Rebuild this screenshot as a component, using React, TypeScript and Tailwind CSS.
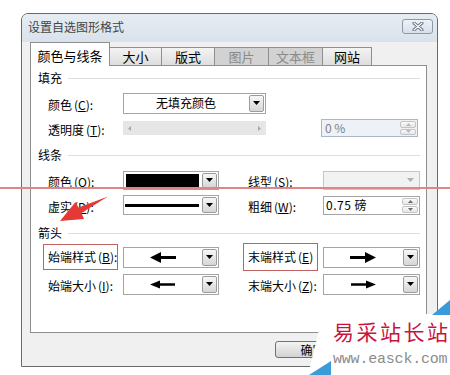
import React from "react";

function Tri({ c = "#000" }: { c?: string }) {
  return (
    <svg width="7" height="4" viewBox="0 0 7 4">
      <polygon points="0,0 7,0 3.5,4" fill={c} />
    </svg>
  );
}

function DropBtn({ disabled }: { disabled?: boolean }) {
  return disabled ? (
    <div className="w-[15px] self-stretch m-[1px] flex items-center justify-center">
      <Tri c="#b0b0b0" />
    </div>
  ) : (
    <div className="w-[15px] self-stretch m-[1px] border border-[#9c9c9c] rounded-[2px] bg-linear-to-b from-[#f7f7f7] to-[#d6d6d6] flex items-center justify-center">
      <Tri />
    </div>
  );
}

function Spin({ dim }: { dim?: boolean }) {
  const c = dim ? "#b8b8b8" : "#6a6a6a";
  return (
    <div className="w-[16px] self-stretch m-[1px] flex flex-col gap-[1px]">
      <div className="flex-1 border border-[#c4c4c4] rounded-[2px] bg-linear-to-b from-[#fafafa] to-[#e6e6e6] flex items-center justify-center">
        <svg width="5" height="3" viewBox="0 0 5 3">
          <polygon points="0,3 5,3 2.5,0" fill={c} />
        </svg>
      </div>
      <div className="flex-1 border border-[#c4c4c4] rounded-[2px] bg-linear-to-b from-[#fafafa] to-[#e6e6e6] flex items-center justify-center">
        <svg width="5" height="3" viewBox="0 0 5 3">
          <polygon points="0,0 5,0 2.5,3" fill={c} />
        </svg>
      </div>
    </div>
  );
}

function Section({ t }: { t: string }) {
  return (
    <div className="flex items-center pl-[7px] pr-[6px] h-[14px]">
      <span className="text-[12px]">{t}</span>
      <div className="flex-1 h-px bg-[#dedede] ml-[6px]" />
    </div>
  );
}

function Lbl({ a, k, colon = true }: { a: string; k: string; colon?: boolean }) {
  return (
    <span className="text-[12px] whitespace-nowrap">
      {a}
      <span className="ml-[2px]">(</span>
      <span className="underline">{k}</span>){colon ? ":" : ""}
    </span>
  );
}

function LeftArrow({ big }: { big?: boolean }) {
  return big ? (
    <svg width="26" height="11" viewBox="0 0 26 11">
      <polygon points="0,5.5 11,0 11,4 26,4 26,7 11,7 11,11" fill="#000" />
    </svg>
  ) : (
    <svg width="25" height="9" viewBox="0 0 25 9">
      <polygon points="0,4.5 10,0.5 10,3.2 25,3.2 25,5.8 10,5.8 10,8.5" fill="#000" />
    </svg>
  );
}

function RightArrow({ big }: { big?: boolean }) {
  return big ? (
    <svg width="26" height="11" viewBox="0 0 26 11">
      <polygon points="26,5.5 15,0 15,4 0,4 0,7 15,7 15,11" fill="#000" />
    </svg>
  ) : (
    <svg width="25" height="9" viewBox="0 0 25 9">
      <polygon points="25,4.5 15,0.5 15,3.2 0,3.2 0,5.8 15,5.8 15,8.5" fill="#000" />
    </svg>
  );
}

export default function App() {
  return (
    <div className="relative w-[450px] h-[375px] overflow-hidden bg-white text-black leading-none font-['Noto_Sans_CJK_SC','Noto_Sans',sans-serif]">
      <div className="ml-[21px] mt-[13px] w-[417px] h-[354px] border border-[#6a6a6a] rounded-t-[7px] bg-[#f0f0f0] flex flex-col">
        {/* Title bar */}
        <div className="h-[28px] shrink-0 rounded-t-[6px] bg-linear-to-b from-[#e6ecf2] to-[#d9e2eb] flex items-start justify-between pl-[6px] pr-[4px]">
          <span className="mt-[7px] text-[12px] text-[#444]">设置自选图形格式</span>
          <div className="mt-[5px] w-[31px] h-[15px] border border-[#8b9aab] rounded-[3px] bg-linear-to-b from-[#eef2f6] to-[#d8e0e8] flex items-center justify-center">
            <svg width="12" height="9" viewBox="0 0 12 9">
              <path d="M2 1 L10 8 M10 1 L2 8" stroke="#5c6a7a" strokeWidth="3" strokeLinecap="round" />
              <path d="M2 1 L10 8 M10 1 L2 8" stroke="#ffffff" strokeWidth="1.2" strokeLinecap="round" />
            </svg>
          </div>
        </div>

        {/* Tabs */}
        <div className="ml-[8px] h-[23px] shrink-0 flex items-end relative z-10 text-[13px]">
          <div className="w-[80px] h-[24px] mb-[-1px] border border-b-0 border-[#8e8f8f] bg-white flex items-center justify-center pt-[1px]">
            颜色与线条
          </div>
          <div className="w-[52px] h-[18px] border border-l-0 border-b-0 border-[#8e8f8f] bg-linear-to-b from-[#f3f3f3] to-[#dedede] flex items-center justify-center">
            大小
          </div>
          <div className="w-[53px] h-[18px] border border-l-0 border-b-0 border-[#8e8f8f] bg-linear-to-b from-[#f3f3f3] to-[#dedede] flex items-center justify-center">
            版式
          </div>
          <div className="w-[54px] h-[18px] border border-l-0 border-b-0 border-[#8e8f8f] bg-[#d2d2d2] text-[#8a8a8a] flex items-center justify-center">
            图片
          </div>
          <div className="w-[54px] h-[18px] border border-l-0 border-b-0 border-[#8e8f8f] bg-[#d2d2d2] text-[#8a8a8a] flex items-center justify-center">
            文本框
          </div>
          <div className="w-[49px] h-[18px] border border-l-0 border-b-0 border-[#8e8f8f] bg-linear-to-b from-[#f3f3f3] to-[#dedede] flex items-center justify-center">
            网站
          </div>
        </div>

        {/* Panel */}
        <div className="ml-[8px] w-[397px] h-[268px] shrink-0 border border-[#8e8f8f] bg-white flex flex-col">
          <div className="mt-[5px]">
            <Section t="填充" />
          </div>

          <div className="mt-[7px] h-[22px] flex items-center pl-[12px]">
            <div className="w-[80px] pl-[5px]">
              <Lbl a="颜色" k="C" />
            </div>
            <div className="w-[143px] h-[21px] border border-[#a5a5a5] bg-white flex">
              <div className="flex-1 flex items-center justify-center text-[12px]">无填充颜色</div>
              <DropBtn />
            </div>
          </div>

          <div className="mt-[3px] h-[22px] flex items-center pl-[12px]">
            <div className="w-[80px] pl-[5px]">
              <Lbl a="透明度" k="T" />
            </div>
            <div className="w-[143px] h-[14px] bg-[#e6e6e6] flex items-center justify-between px-[5px]">
              <svg width="3" height="5" viewBox="0 0 3 5">
                <polygon points="3,0 3,5 0,2.5" fill="#a8a8a8" />
              </svg>
              <svg width="3" height="5" viewBox="0 0 3 5">
                <polygon points="0,0 0,5 3,2.5" fill="#a8a8a8" />
              </svg>
            </div>
            <div className="ml-[55px] w-[97px] h-[18px] border border-[#aab6c6] bg-[#eef2f6] flex">
              <div className="flex-1 flex items-center pl-[3px] text-[12px] text-[#808080]">0 %</div>
              <Spin dim />
            </div>
          </div>

          <div className="mt-[9px]">
            <Section t="线条" />
          </div>

          <div className="mt-[7px] h-[22px] flex items-center pl-[12px]">
            <div className="w-[80px] pl-[5px]">
              <Lbl a="颜色" k="O" />
            </div>
            <div className="w-[96px] h-[19px] border border-[#a5a5a5] bg-white flex">
              <div className="flex-1 p-[2px]">
                <div className="w-full h-full bg-black" />
              </div>
              <DropBtn />
            </div>
            <div className="ml-[24px] w-[80px] pl-[5px]">
              <Lbl a="线型" k="S" />
            </div>
            <div className="w-[97px] h-[19px] border border-[#c6c6c6] bg-[#f2f2f2] flex">
              <div className="flex-1" />
              <DropBtn disabled />
            </div>
          </div>

          <div className="mt-[3px] h-[22px] flex items-center pl-[12px]">
            <div className="w-[80px] pl-[5px]">
              <Lbl a="虚实" k="D" />
            </div>
            <div className="w-[96px] h-[20px] border border-[#a5a5a5] bg-white flex">
              <div className="flex-1 flex items-center pl-[1px] pr-[2px]">
                <div className="w-full h-[3px] bg-black" />
              </div>
              <DropBtn />
            </div>
            <div className="ml-[24px] w-[80px] pl-[5px]">
              <Lbl a="粗细" k="W" />
            </div>
            <div className="w-[97px] h-[19px] border border-[#a5a5a5] bg-white flex">
              <div className="flex-1 flex items-center pl-[2px] text-[12px] tracking-[0.5px]">0.75 磅</div>
              <Spin />
            </div>
          </div>

          <div className="mt-[10px]">
            <Section t="箭头" />
          </div>

          <div className="mt-[6px] h-[22px] flex items-center pl-[12px]">
            <div className="w-[80px]">
              <div className="w-[75px] h-[26px] border border-[#c06262] flex items-center pl-[4px]">
                <Lbl a="始端样式" k="B" />
              </div>
            </div>
            <div className="w-[96px] h-[21px] border border-[#a5a5a5] bg-white flex">
              <div className="flex-1 flex items-center justify-center">
                <LeftArrow big />
              </div>
              <DropBtn />
            </div>
            <div className="ml-[24px] w-[80px]">
              <div className="w-[75px] h-[28px] border border-[#c06262] flex items-center pl-[4px]">
                <Lbl a="末端样式" k="E" colon={false} />
              </div>
            </div>
            <div className="w-[97px] h-[21px] border border-[#a5a5a5] bg-white flex">
              <div className="flex-1 flex items-center justify-center">
                <RightArrow big />
              </div>
              <DropBtn />
            </div>
          </div>

          <div className="mt-[5px] h-[22px] flex items-center pl-[12px]">
            <div className="w-[80px] pl-[5px]">
              <Lbl a="始端大小" k="I" />
            </div>
            <div className="w-[96px] h-[21px] border border-[#a5a5a5] bg-white flex">
              <div className="flex-1 flex items-center justify-center">
                <LeftArrow />
              </div>
              <DropBtn />
            </div>
            <div className="ml-[24px] w-[80px] pl-[5px]">
              <Lbl a="末端大小" k="Z" />
            </div>
            <div className="w-[97px] h-[21px] border border-[#a5a5a5] bg-white flex">
              <div className="flex-1 flex items-center justify-center">
                <RightArrow />
              </div>
              <DropBtn />
            </div>
          </div>
        </div>

        {/* Buttons */}
        <div className="flex-1 flex items-start">
          <div className="ml-[253px] mt-[8px] w-[75px] h-[17px] border border-[#3c7fb1] rounded-[3px] bg-linear-to-b from-[#f4f4f4] to-[#d2d2d2] flex items-center justify-center text-[12px]">
            确定
          </div>
        </div>
      </div>

      {/* Red horizontal annotation line */}
      <div className="absolute left-0 top-[187px] w-[450px] h-[2px] bg-[#dc8686]" />

      {/* Red annotation arrow */}
      <svg className="absolute left-0 top-0 pointer-events-none" width="450" height="375" viewBox="0 0 450 375">
        <polygon
          points="60,221 75.5,202 78.5,207.5 108,196.5 81.5,213 84,219"
          fill="#e53935"
        />
      </svg>

      {/* Watermark */}
      <svg className="absolute left-0 top-0 pointer-events-none" width="450" height="375" viewBox="0 0 450 375">
        <polygon points="323,314 450,314 450,375 308,375" fill="#ffffff" />
        <polygon points="432,315 450,315 450,300" fill="#3a9bd8" />
        <polygon points="309,375 331,375 331,361" fill="#3a9bd8" />
      </svg>
      <div className="absolute left-[333px] top-[321px] text-[21px] tracking-[2.5px] text-[#c8143c] whitespace-nowrap leading-none">
        易采站长站
      </div>
      <div className="absolute left-[333px] top-[352px] text-[15px] tracking-[-0.2px] text-[#8c8c8c] whitespace-nowrap leading-none font-['Liberation_Mono',monospace]">
        www.easck.com
      </div>
    </div>
  );
}
